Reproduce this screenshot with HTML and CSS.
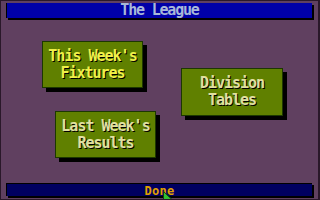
FILE: index.html
```html
<!DOCTYPE html>
<html>
<head>
<meta charset="utf-8">
<link rel="stylesheet" href="styles.css">
</head>
<body>
<div class="screen">
  <header class="titlebar">The League</header>
  <main class="menu">
    <div class="col col-left">
      <button class="btn btn-fixtures active">This Week's<br>Fixtures</button>
      <button class="btn btn-results">Last Week's<br>Results</button>
    </div>
    <div class="col col-right">
      <button class="btn btn-tables">Division<br>Tables</button>
    </div>
  </main>
  <footer class="donebar">
    <span class="done">Done</span>
    <svg class="pointer" width="11" height="10" viewBox="0 0 11 10">
      <polygon points="0.5,0.5 0.5,9.5 10,9.5" fill="#30c030" stroke="#104010" stroke-width="1"/>
    </svg>
  </footer>
</div>
</body>
</html>
```
FILE: styles.css
```css
html, body {
  margin: 0;
  padding: 0;
  background: #604060;
}

.screen {
  position: relative;
  width: 320px;
  height: 200px;
  box-sizing: border-box;
  border-top: 1px solid #2a182a;
  border-left: 1px solid #2a182a;
  border-right: 2px solid #2a182a;
  border-bottom: 1px solid #2a182a;
  background: #604060;
  display: flex;
  flex-direction: column;
  overflow: hidden;
  font-family: "DejaVu Sans Mono", "Liberation Mono", monospace;
  font-weight: bold;
}

.titlebar {
  margin: 2px 0 0 5px;
  width: 306px;
  height: 15px;
  box-sizing: border-box;
  border-left: 1px solid #000;
  background: #0000a8;
  box-shadow: 2px 2px 0 #000;
  color: #a8b8d8;
  font-size: 15px;
  letter-spacing: -1.2px;
  line-height: 15px;
  text-align: center;
}

.menu {
  flex: 1;
  display: flex;
  align-items: flex-start;
}

.col {
  display: flex;
  flex-direction: column;
  align-items: flex-start;
}

.btn {
  width: 101px;
  height: 47px;
  box-sizing: border-box;
  padding: 0;
  margin: 0;
  border: 1px solid #1c3800;
  background: #608000;
  box-shadow: 4px 4px 0 #000;
  font-family: "DejaVu Sans Mono", "Liberation Mono", monospace;
  font-weight: bold;
  font-size: 15px;
  letter-spacing: -1px;
  line-height: 17px;
  color: #e0e0a0;
  text-shadow: 1px 1px 0 #000;
  text-align: center;
  cursor: default;
}

.btn.active {
  color: #f0f048;
}

.btn-fixtures {
  margin: 23px 0 0 41px;
}

.btn-results {
  margin: 23px 0 0 54px;
}

.btn-tables {
  margin: 50px 0 0 25px;
  width: 102px;
  height: 48px;
}

.donebar {
  position: relative;
  margin: 0 0 3px 5px;
  width: 306px;
  height: 13px;
  box-sizing: border-box;
  border-left: 1px solid #000;
  border-top: 1px solid #000;
  background: #000060;
  box-shadow: 2px 2px 0 #000;
  text-align: center;
  line-height: 12px;
}

.done {
  color: #e0a000;
  font-size: 12px;
  letter-spacing: 0.3px;
}

.pointer {
  position: absolute;
  left: 156px;
  top: 7px;
  overflow: visible;
}
```
